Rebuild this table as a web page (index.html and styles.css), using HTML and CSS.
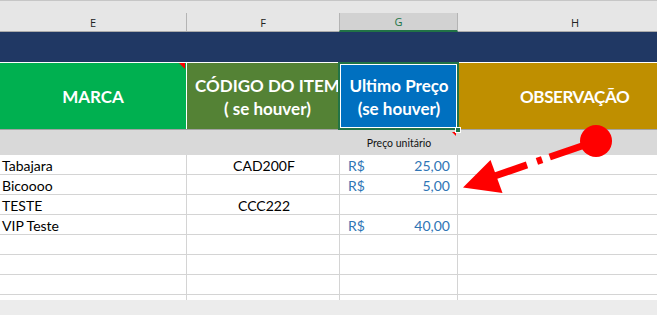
FILE: index.html
```html
<!DOCTYPE html>
<html lang="pt">
<head>
<meta charset="utf-8">
<title>Planilha</title>
<link rel="stylesheet" href="styles.css">
</head>
<body>
<div class="sheet">
  <div class="colhdrs">
    <div class="ch">E</div>
    <div class="ch">F</div>
    <div class="ch ch-sel">G</div>
    <div class="ch ch-last">H</div>
  </div>
  <div class="band"></div>
  <div class="hdr">
    <div class="hc hc-marca">MARCA<span class="comment"></span></div>
    <div class="hc hc-codigo">CÓDIGO DO ITEM<br>( se houver)</div>
    <div class="hc hc-preco">Ultimo Preço<br>(se houver)<span class="sel"></span><span class="handle"></span></div>
    <div class="hc hc-obs">OBSERVAÇÃO</div>
  </div>
  <div class="unitrow">
    <div class="uc"></div>
    <div class="uc"></div>
    <div class="uc uc-g">Preço unitário<span class="comment2"></span></div>
    <div class="uc"></div>
  </div>
  <div class="rows">
    <div class="row"><div class="c c-txt">Tabajara</div><div class="c c-mid">CAD200F</div><div class="c c-money"><span>R$</span><span>25,00</span></div><div class="c"></div></div>
    <div class="row"><div class="c c-txt">Bicoooo</div><div class="c c-mid"></div><div class="c c-money"><span>R$</span><span>5,00</span></div><div class="c"></div></div>
    <div class="row"><div class="c c-txt">TESTE</div><div class="c c-mid">CCC222</div><div class="c c-money"></div><div class="c"></div></div>
    <div class="row"><div class="c c-txt">VIP Teste</div><div class="c c-mid"></div><div class="c c-money"><span>R$</span><span>40,00</span></div><div class="c"></div></div>
    <div class="row"><div class="c"></div><div class="c"></div><div class="c"></div><div class="c"></div></div>
    <div class="row"><div class="c"></div><div class="c"></div><div class="c"></div><div class="c"></div></div>
    <div class="row"><div class="c"></div><div class="c"></div><div class="c"></div><div class="c"></div></div>
    <div class="row row-part"><div class="c"></div><div class="c"></div><div class="c"></div><div class="c"></div></div>
  </div>
  <div class="scroll"></div>
  <svg class="arrow" width="657" height="315" viewBox="0 0 657 315">
    <g stroke="#ff0000" stroke-width="7" stroke-linecap="butt">
      <line x1="587" y1="144.2" x2="549.7" y2="157"/>
      <line x1="542.1" y1="159.6" x2="536.9" y2="161.4"/>
      <line x1="527" y1="164.9" x2="494" y2="176.3"/>
    </g>
    <circle cx="596" cy="141" r="16" fill="#ff0000"/>
    <polygon points="463,187.5 490.5,160 502.5,193" fill="#ff0000"/>
  </svg>
</div>
</body>
</html>
```

FILE: styles.css
```css
* { box-sizing: border-box; }
html, body { margin: 0; padding: 0; }
body {
  width: 657px;
  height: 315px;
  overflow: hidden;
  background: #ffffff;
  font-family: Lato, "Liberation Sans", sans-serif;
}
.sheet {
  position: relative;
  width: 657px;
  height: 315px;
  overflow: hidden;
}
.colhdrs {
  display: grid;
  grid-template-columns: 187px 153px 118px 1fr;
  height: 32px;
  padding-top: 12px;
  background: #e6e6e6;
  border-top: 1px solid #c6c6c6;
  border-bottom: 1px solid #ababab;
  font-family: "Open Sans", "Noto Sans", sans-serif;
  font-size: 11px;
  color: #222222;
}
.ch {
  display: flex;
  align-items: center;
  justify-content: center;
  border-right: 1px solid #b4b4b4;
}
.ch-sel {
  background: #d2d2d2;
  border-left: 1px solid #b4b4b4;
  margin-left: -1px;
  border-bottom: 2px solid #217346;
  margin-bottom: -1px;
  color: #217346;
}
.ch-last { border-right: none; padding-right: 0; justify-content: flex-start; padding-left: 113px; }
.band {
  height: 31px;
  background: #203864;
  border-bottom: 1px solid #ffffff;
}
.hdr {
  display: grid;
  grid-template-columns: 187px 153px 118px 1fr;
  height: 67px;
  border-bottom: 1px solid #a3a3a3;
  color: #ffffff;
  font-weight: 700;
  font-size: 17px;
  line-height: 23px;
}
.hc {
  position: relative;
  display: flex;
  align-items: center;
  justify-content: center;
  text-align: center;
  white-space: nowrap;
  overflow: hidden;
  padding-top: 2px;
}
.hc-marca { background: #00b050; border-right: 1px solid #ffffff; padding-top: 0; }
.hc-codigo { background: #548235; justify-content: flex-start; padding-left: 8px; }
.hc-preco { background: #0070c0; overflow: visible; }
.hc-obs { background: #bf8f00; justify-content: flex-start; padding-left: 62px; padding-top: 0; letter-spacing: -0.4px; }
.comment {
  position: absolute;
  top: 0;
  right: 1px;
  width: 0;
  height: 0;
  border-top: 6px solid #ff0000;
  border-left: 6px solid transparent;
}
.sel {
  position: absolute;
  top: -1px;
  left: -2px;
  right: -1px;
  bottom: -1px;
  border: 2px solid #217346;
  box-shadow: inset 0 0 0 1px #ffffff;
  z-index: 2;
}
.handle {
  position: absolute;
  right: -3px;
  bottom: -4px;
  width: 6px;
  height: 6px;
  background: #217346;
  border: 1px solid #ffffff;
  z-index: 3;
}
.unitrow {
  display: grid;
  grid-template-columns: 187px 153px 118px 1fr;
  height: 25px;
  background: #d9d9d9;
  font-size: 10.5px;
  color: #111111;
}
.uc-g {
  position: relative;
  display: flex;
  align-items: center;
  justify-content: center;
  padding-top: 1px;
}
.comment2 {
  position: absolute;
  top: 2px;
  right: 2px;
  width: 0;
  height: 0;
  border-top: 4px solid #ff0000;
  border-left: 4px solid transparent;
}
.rows { display: flex; flex-direction: column; }
.row {
  display: grid;
  grid-template-columns: 187px 153px 118px 1fr;
  height: 20px;
  font-size: 14px;
  color: #000000;
}
.row-part { height: 5px; }
.c {
  display: flex;
  align-items: center;
  padding-top: 1px;
  border-right: 1px solid #d4d4d4;
  border-bottom: 1px solid #d4d4d4;
  white-space: nowrap;
  overflow: hidden;
}
.row-part .c { border-bottom: none; }
.c:last-child { border-right: none; }
.c-txt { padding-left: 2px; }
.c-mid { justify-content: center; padding-left: 2px; }
.c-money {
  justify-content: space-between;
  padding: 1px 7px 0 8px;
  color: #2f75b5;
}
.scroll {
  height: 15px;
  background: #ececec;
}
.arrow {
  position: absolute;
  left: 0;
  top: 0;
  pointer-events: none;
  z-index: 5;
}
```
